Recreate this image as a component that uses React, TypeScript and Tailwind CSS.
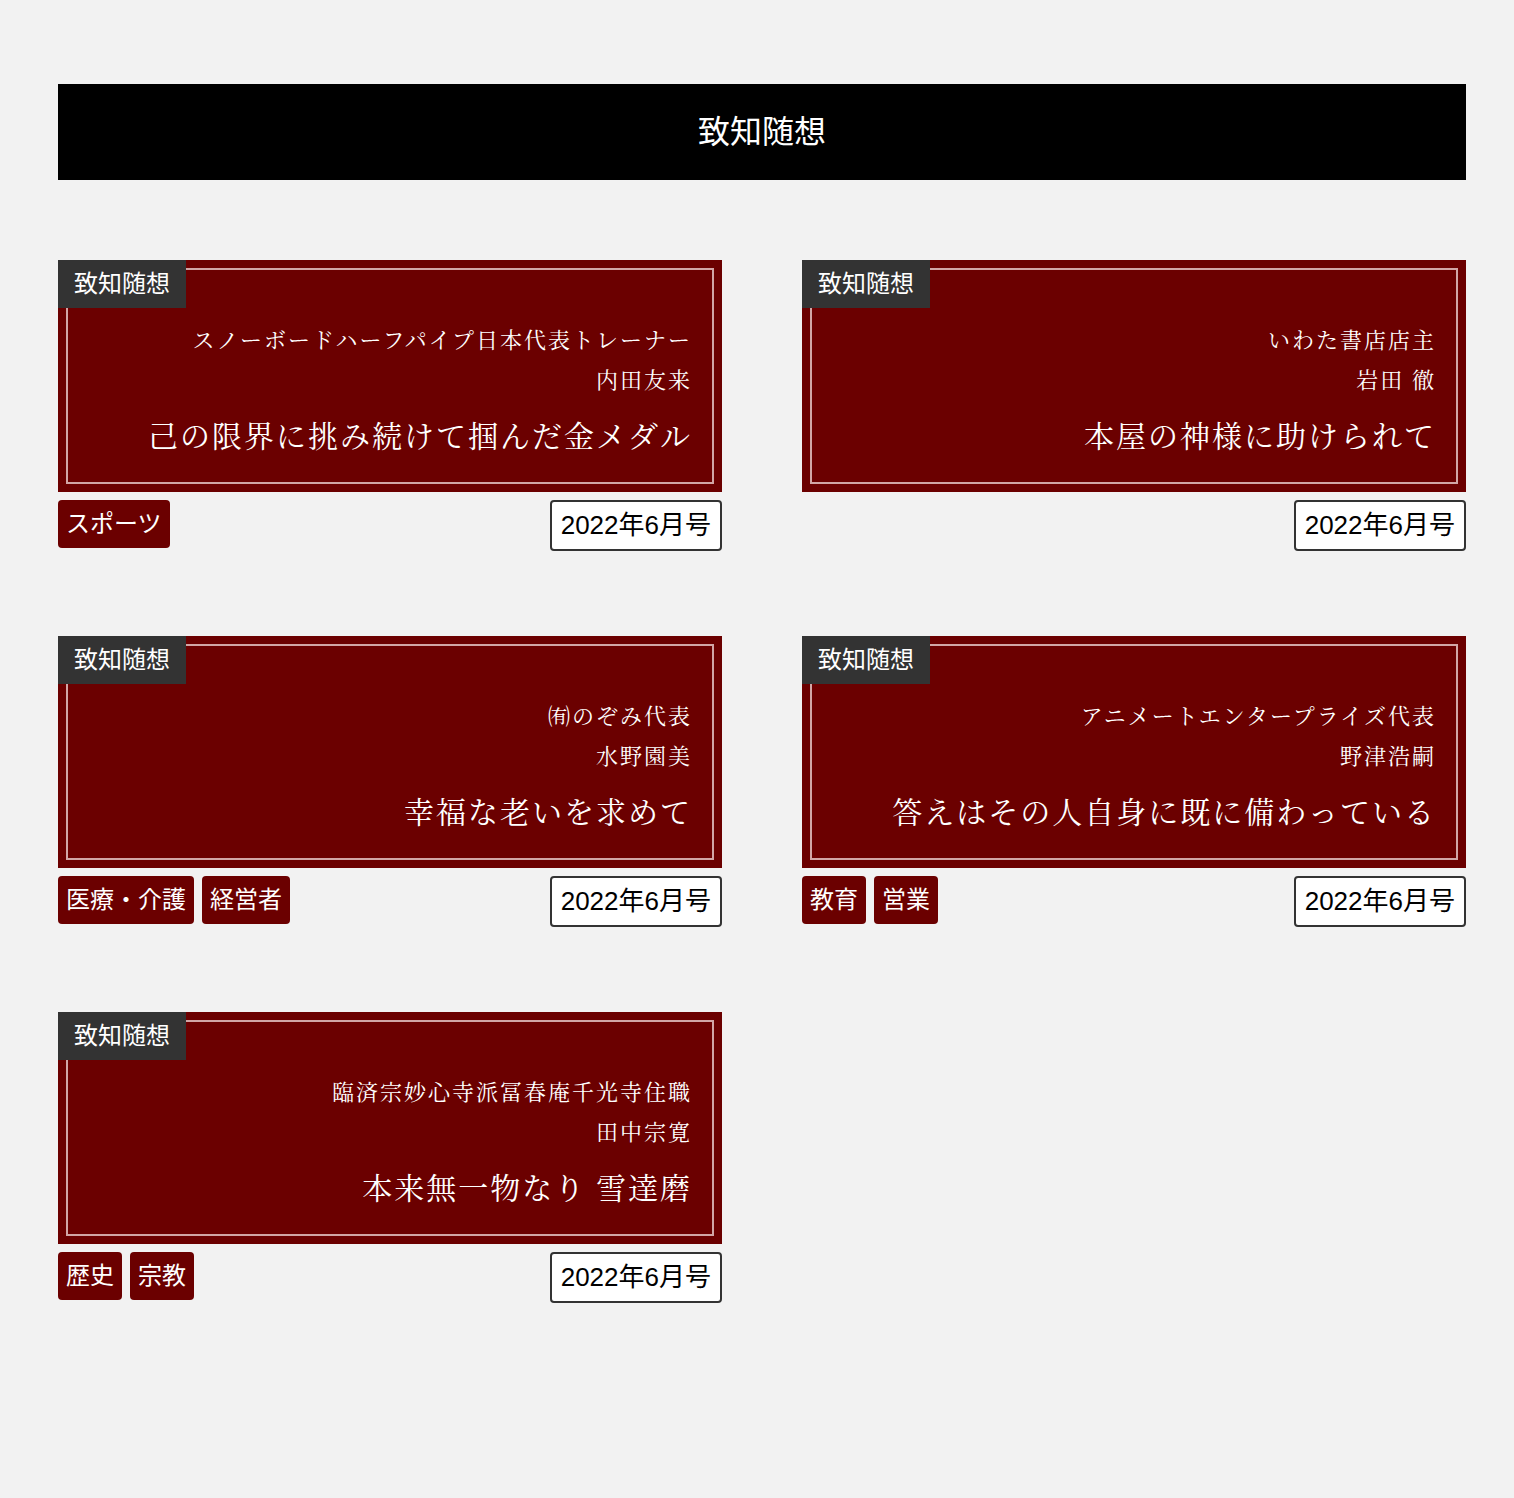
import React from 'react';

type Essay = {
  role: string;
  name: string;
  title: string;
  tags: string[];
  issue: string;
};

const essays: Essay[] = [
  {
    role: 'スノーボードハーフパイプ日本代表トレーナー',
    name: '内田友来',
    title: '己の限界に挑み続けて掴んだ金メダル',
    tags: ['スポーツ'],
    issue: '2022年6月号',
  },
  {
    role: 'いわた書店店主',
    name: '岩田 徹',
    title: '本屋の神様に助けられて',
    tags: [],
    issue: '2022年6月号',
  },
  {
    role: '㈲のぞみ代表',
    name: '水野園美',
    title: '幸福な老いを求めて',
    tags: ['医療・介護', '経営者'],
    issue: '2022年6月号',
  },
  {
    role: 'アニメートエンタープライズ代表',
    name: '野津浩嗣',
    title: '答えはその人自身に既に備わっている',
    tags: ['教育', '営業'],
    issue: '2022年6月号',
  },
  {
    role: '臨済宗妙心寺派冨春庵千光寺住職',
    name: '田中宗寛',
    title: '本来無一物なり 雪達磨',
    tags: ['歴史', '宗教'],
    issue: '2022年6月号',
  },
];

const sans = "font-['Liberation_Sans','Noto_Sans_CJK_JP',sans-serif]";
const serif =
  "font-['Noto_Serif_CJK_JP','Noto_Serif_JP','Liberation_Serif','Noto_Sans_CJK_JP',serif]";

const EssayCard = ({ essay }: { essay: Essay }) => (
  <div className="flex flex-col">
    <div className="relative h-[232px] bg-[#6b0000] p-2">
      <div className="h-full border-2 border-[#d2a6a6] pt-[49px] pr-[20px] text-right text-white">
        <p className={`${serif} text-[22px] leading-[40px] tracking-[2px]`}>{essay.role}</p>
        <p className={`${serif} text-[22px] leading-[40px] tracking-[2px]`}>{essay.name}</p>
        <h2 className={`${serif} mt-[11px] text-[30px] leading-[48px] tracking-[2px]`}>
          {essay.title}
        </h2>
      </div>
      <span
        className={`${sans} absolute left-0 top-0 flex h-12 w-32 items-center justify-center bg-[#333333] text-[24px] text-white`}
      >
        致知随想
      </span>
    </div>
    <div className="mt-2 flex items-start justify-between">
      <div className="flex gap-2">
        {essay.tags.map((tag) => (
          <span
            key={tag}
            className={`${sans} flex h-12 items-center rounded bg-[#6b0000] px-2 text-[24px] text-white`}
          >
            {tag}
          </span>
        ))}
      </div>
      <span
        className={`${sans} flex h-[51px] items-center rounded border-2 border-[#333333] bg-white px-[9px] text-[26px] text-black`}
      >
        {essay.issue}
      </span>
    </div>
  </div>
);

const App = () => {
  return (
    <div className="min-h-[1498px] bg-[#f2f2f2] pt-[84px]">
      <div className="ml-[58px] w-[1408px]">
        <header className="flex h-24 items-center justify-center bg-black">
          <h1 className={`${sans} text-[32px] text-white`}>致知随想</h1>
        </header>
        <main className="mt-20 grid grid-cols-2 gap-x-20 gap-y-[85px]">
          {essays.map((essay) => (
            <EssayCard key={essay.name} essay={essay} />
          ))}
        </main>
      </div>
    </div>
  );
};

export default App;
